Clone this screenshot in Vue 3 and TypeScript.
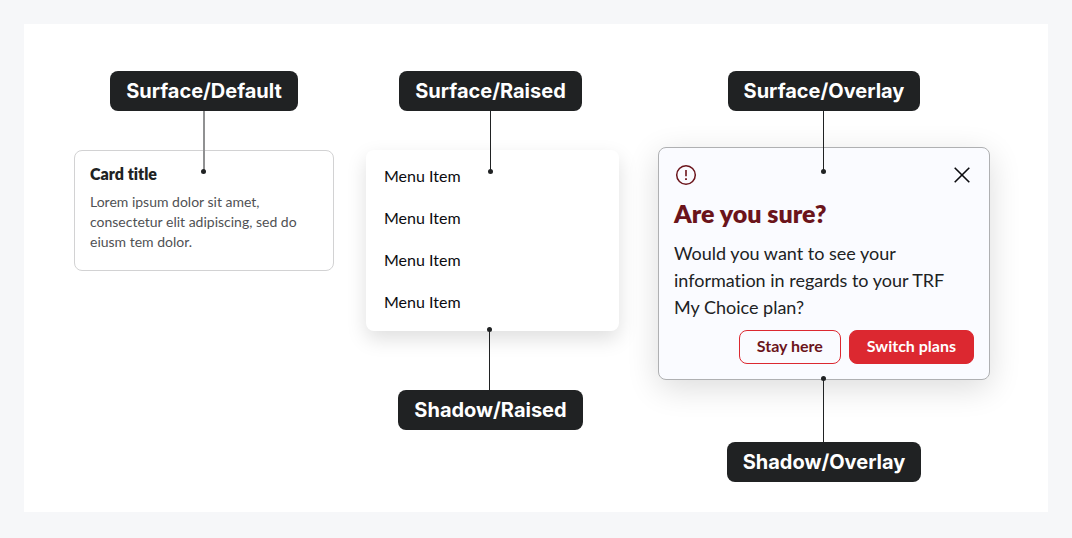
<script setup lang="ts">
const menuItems: string[] = ['Menu Item', 'Menu Item', 'Menu Item', 'Menu Item']
</script>

<template>
  <main class="page">
    <div class="board">
      <section class="column column-default">
        <div class="tag tag-above tag-soft">Surface/Default</div>
        <article class="card">
          <h3 class="card-title">Card title</h3>
          <p class="card-text">Lorem ipsum dolor sit amet, consectetur elit adipiscing, sed do eiusm tem dolor.</p>
        </article>
      </section>

      <section class="column column-raised">
        <div class="tag tag-above">Surface/Raised</div>
        <ul class="menu">
          <li v-for="(item, index) in menuItems" :key="index">
            <button type="button" class="menu-item">{{ item }}</button>
          </li>
        </ul>
        <div class="tag tag-below">Shadow/Raised</div>
      </section>

      <section class="column column-overlay">
        <div class="tag tag-above">Surface/Overlay</div>
        <div class="dialog" role="dialog" aria-labelledby="dialog-title">
          <div class="dialog-top">
            <svg class="icon" viewBox="0 0 24 24" fill="none" aria-hidden="true">
              <circle cx="12" cy="12" r="9.3" stroke="#6b141b" stroke-width="1.5" />
              <path d="M12 7v6.2" stroke="#6b141b" stroke-width="1.6" />
              <path d="M12 15.2v1.8" stroke="#6b141b" stroke-width="1.8" />
            </svg>
            <button type="button" class="close" aria-label="Close">
              <svg class="icon" viewBox="0 0 24 24" fill="none" aria-hidden="true">
                <path d="M4.7 4.7l14.6 14.6M19.3 4.7L4.7 19.3" stroke="#0b0b0f" stroke-width="1.6" />
              </svg>
            </button>
          </div>
          <h2 id="dialog-title" class="dialog-title">Are you sure?</h2>
          <p class="dialog-text">Would you want to see your information in regards to your TRF My Choice plan?</p>
          <div class="actions">
            <button type="button" class="button button-outline">Stay here</button>
            <button type="button" class="button button-solid">Switch plans</button>
          </div>
        </div>
        <div class="tag tag-below tag-far">Shadow/Overlay</div>
      </section>
    </div>
  </main>
</template>

<style>
body {
  margin: 0;
  background: #f6f7f9;
}
</style>

<style scoped>
.page {
  box-sizing: border-box;
  min-height: 100vh;
  padding: 24px 24px 26px;
  display: flex;
  font-family: Lato, "Open Sans", sans-serif;
  font-variant-ligatures: none;
  color: #202223;
}

.board {
  flex: 1;
  display: flex;
  align-items: flex-start;
  padding: 47px 58px 30px 50px;
  background: #fff;
}

.column {
  min-width: 0;
  display: flex;
  flex-direction: column;
  align-items: center;
}

.column-default {
  flex: 260 1 0;
}

.column-raised {
  flex: 253 1 0;
  margin-left: 32px;
}

.column-overlay {
  flex: 332 1 0;
  margin-left: 39px;
}

.tag {
  position: relative;
  z-index: 1;
  padding: 0 16px;
  border-radius: 8px;
  background: #202223;
  color: #fff;
  font: 700 20px/40px Inter, sans-serif;
  white-space: nowrap;
}

.column-raised .tag {
  margin-right: 4px;
}

.tag::before,
.tag::after {
  content: "";
  position: absolute;
  left: 50%;
  background: #202223;
}

.tag::before {
  width: 1px;
  height: 60px;
  margin-left: -1px;
}

.tag::after {
  width: 5px;
  height: 5px;
  margin-left: -3px;
  border-radius: 50%;
}

.tag-above::before {
  top: 100%;
}

.tag-above::after {
  top: 98px;
}

.tag-soft::before {
  width: 2px;
  background: #909192;
}

.tag-below {
  margin-top: 59px;
}

.tag-below::before {
  bottom: 100%;
}

.tag-below::after {
  bottom: 98px;
}

.tag-far {
  margin-top: 62px;
}

.tag-far::before {
  height: 63px;
}

.tag-far::after {
  bottom: 101px;
}

.card,
.menu,
.dialog {
  box-sizing: border-box;
  width: 100%;
  border-radius: 8px;
}

.card {
  margin-top: 39px;
  padding: 14px 15px 18px;
  border: 1px solid #d2d2d3;
  background: #fff;
}

.card-title {
  margin: 0 0 9px;
  font-size: 16px;
  line-height: 18px;
  font-weight: 800;
}

.card-text {
  margin: 0;
  font-size: 14px;
  line-height: 20px;
  color: #505154;
}

.menu {
  list-style: none;
  margin: 39px 0 0;
  padding: 5px 0 8px;
  background: #fff;
  box-shadow: 0 8px 20px rgba(0, 0, 0, 0.13);
}

.menu-item {
  display: block;
  width: 100%;
  height: 42px;
  padding: 0 18px;
  border: 0;
  background: none;
  color: #0b0b0f;
  font: 400 16px/24px Lato, sans-serif;
  text-align: left;
}

.dialog {
  margin-top: 36px;
  padding: 15px;
  border: 1px solid #afb0b2;
  background: #fafbff;
  box-shadow: 0 8px 32px rgba(0, 0, 0, 0.14);
}

.dialog-top {
  display: flex;
  justify-content: space-between;
}

.icon {
  display: block;
  width: 24px;
  height: 24px;
}

.close {
  padding: 0;
  border: 0;
  background: none;
}

.dialog-title {
  margin: 10px 0 11px;
  font-size: 25px;
  line-height: 32px;
  font-weight: 800;
  color: #6b141b;
}

.dialog-text {
  margin: 0 0 9px;
  padding-right: 16px;
  font-size: 18px;
  line-height: 27px;
}

.actions {
  display: flex;
  justify-content: flex-end;
  gap: 8px;
}

.button {
  height: 34px;
  padding: 0 17px 2px;
  border: 1px solid #dc2830;
  border-radius: 8px;
  font: 700 16px/24px Lato, sans-serif;
}

.button-outline {
  background: #fafbff;
  color: #6b141b;
}

.button-solid {
  background: #dc2830;
  color: #fff;
}
</style>
